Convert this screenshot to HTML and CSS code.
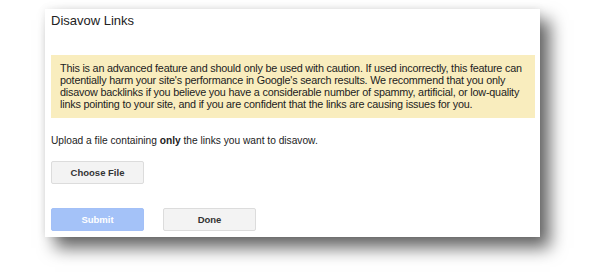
FILE: index.html
```html
<!DOCTYPE html>
<html lang="en">
<head>
    <meta charset="UTF-8">
    <title>Disavow Links</title>
    <link rel="stylesheet" href="styles.css">
</head>
<body>
    <section class="dialog">
        <h1 class="dialog-title">Disavow Links</h1>

        <p class="warning">
            This is an advanced feature and should only be used with caution. If used incorrectly, this feature can<br>
            potentially harm your site's performance in Google's search results. We recommend that you only<br>
            disavow backlinks if you believe you have a considerable number of spammy, artificial, or low-quality<br>
            links pointing to your site, and if you are confident that the links are causing issues for you.
        </p>

        <p class="upload-text">Upload a file containing <b>only</b> the links you want to disavow.</p>

        <button class="button choose-button">Choose File</button>

        <div class="actions">
            <button class="button submit-button" disabled>Submit</button>
            <button class="button done-button">Done</button>
        </div>
    </section>
</body>
</html>
```

FILE: styles.css
```css
html,
body {
    height: 100%;
}

body {
    margin: 0;
    padding: 9px 0 0 45px;
    box-sizing: border-box;
    min-height: 272px;
    background-color: #fff;
    font-family: "Liberation Sans", Arial, sans-serif;
    color: #222;
}

.dialog {
    box-sizing: border-box;
    width: 495px;
    height: 228px;
    padding: 3px 5px 0 6px;
    background-color: #fff;
    box-shadow: 10px 11px 16px rgba(0, 0, 0, 0.6), 0 0 8px rgba(0, 0, 0, 0.08);
}

.dialog-title {
    margin: 0;
    font-size: 13px;
    font-weight: normal;
    line-height: 17px;
}

.warning {
    margin: 26px 0 0 0;
    padding: 7px 9px 8px;
    background-color: #f9edbe;
    font-size: 10.8px;
    letter-spacing: -0.2px;
    line-height: 12px;
    white-space: nowrap;
}

.upload-text {
    margin: 16px 0 0 0;
    font-size: 10.2px;
    line-height: 13px;
}

.button {
    box-sizing: border-box;
    width: 93px;
    height: 23px;
    padding: 0;
    border-radius: 2px;
    font-family: "Liberation Sans", Arial, sans-serif;
    font-size: 9.5px;
    font-weight: bold;
    cursor: pointer;
}

.choose-button,
.done-button {
    border: 1px solid #dcdcdc;
    background-color: #f3f3f3;
    color: #333;
}

.choose-button {
    display: block;
    margin-top: 14px;
}

.actions {
    display: flex;
    gap: 19px;
    margin-top: 24px;
}

.submit-button {
    border: 1px solid #a3c0f7;
    background-color: #a4c2f8;
    color: #fff;
}
```
